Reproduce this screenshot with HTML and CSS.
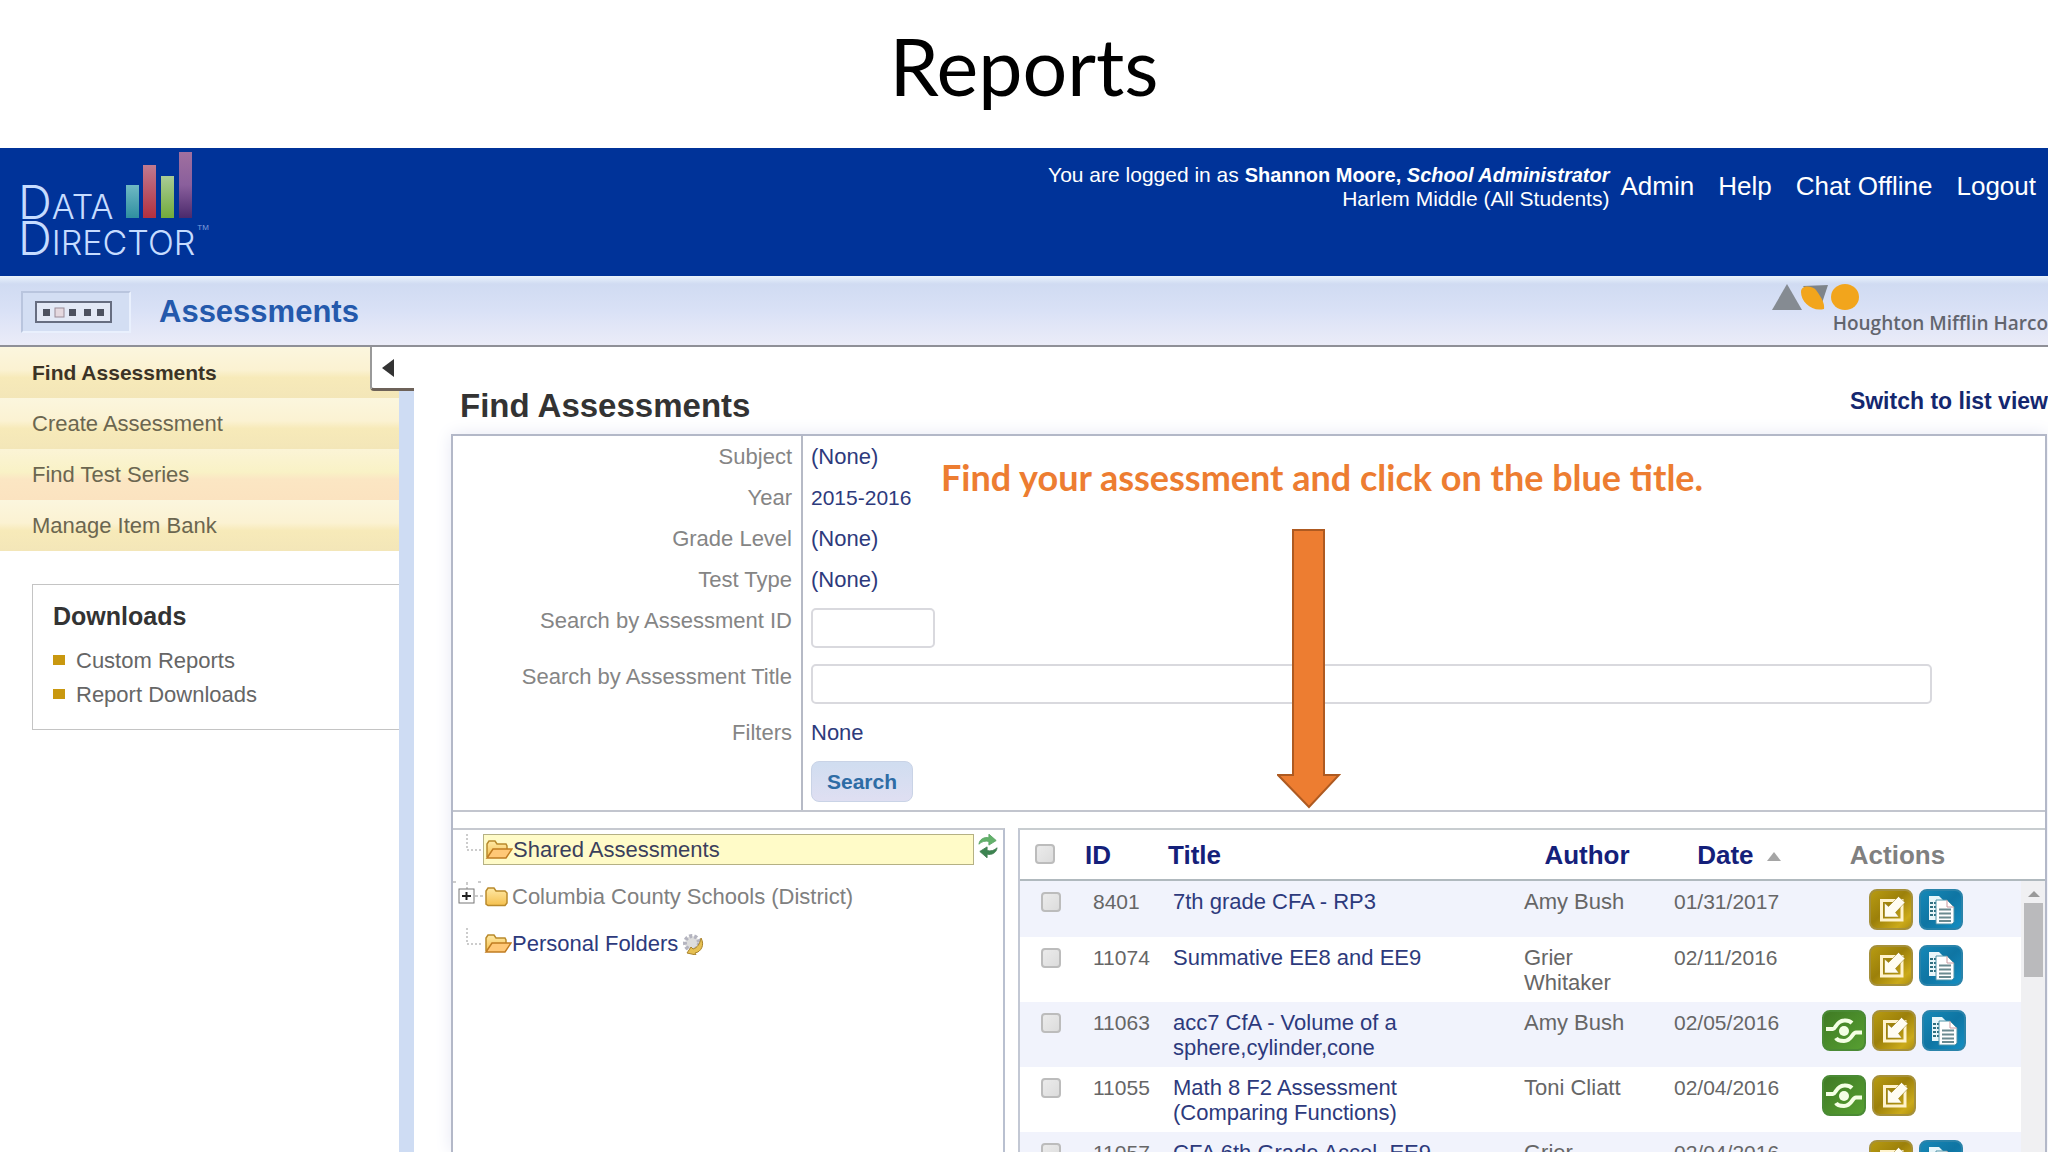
FILE: index.html
```html
<!DOCTYPE html>
<html lang="en">
<head>
    <meta charset="UTF-8">
    <meta name="viewport" content="width=device-width, initial-scale=1.0">
    <title>Reports</title>
    <link rel="stylesheet" href="styles.css">
</head>
<body>
    <!-- Shared icon shapes -->
    <svg class="sprite" aria-hidden="true">
        <defs>
            <linearGradient id="gold" x1="0" y1="0" x2="1" y2="1">
                <stop offset="0" stop-color="#b99c12"/>
                <stop offset="0.45" stop-color="#9c800a"/>
                <stop offset="0.8" stop-color="#cbaa1a"/>
                <stop offset="1" stop-color="#ab8d10"/>
            </linearGradient>
            <linearGradient id="blue" x1="0" y1="0" x2="1" y2="1">
                <stop offset="0" stop-color="#1689b8"/>
                <stop offset="0.5" stop-color="#0f75a3"/>
                <stop offset="1" stop-color="#1590c4"/>
            </linearGradient>
            <linearGradient id="green" x1="0" y1="0" x2="1" y2="1">
                <stop offset="0" stop-color="#3f7a24"/>
                <stop offset="1" stop-color="#57a032"/>
            </linearGradient>
            <linearGradient id="folder" x1="0" y1="0" x2="0" y2="1">
                <stop offset="0" stop-color="#ffe9a6"/>
                <stop offset="1" stop-color="#f5c04e"/>
            </linearGradient>
        </defs>
        <symbol id="icon-edit" viewBox="0 0 44 41">
            <rect x="1" y="1" width="42" height="39" rx="7" fill="url(#gold)" stroke="#a5903a" stroke-width="2"/>
            <path d="M12.500 11.500H33V31H12.500Z" fill="none" stroke="#fff3cc" stroke-width="3"/>
            <path d="M15.500 28V14L19.500 17.500L29.500 7.500L36 13.500L26.500 23.500L30 28Z" fill="#fffdf2" stroke="#8d7410" stroke-width="0.500"/>
        </symbol>
        <symbol id="icon-copy" viewBox="0 0 44 41">
            <rect x="1" y="1" width="42" height="39" rx="7" fill="url(#blue)" stroke="#2a83aa" stroke-width="2"/>
            <path d="M10 7H20L24 11V31H10Z" fill="#e8f6fa"/>
            <path d="M11 14H17M11 18H17M11 22H17M11 26H17" stroke="#2f6f80" stroke-width="2" stroke-dasharray="3 1"/>
            <path d="M17 11H28L35 18V33L33 35H17Z" fill="#fff" stroke="#4f93a8"/>
            <path d="M28 11V18H35" fill="none" stroke="#c99aa0"/>
            <path d="M20 20.500H32M20 24.500H32M20 28.500H32M20 32H32" stroke="#6a8a90" stroke-width="2"/>
        </symbol>
        <symbol id="icon-share" viewBox="0 0 44 41">
            <rect x="1" y="1" width="42" height="39" rx="7" fill="url(#green)" stroke="#4a8a35" stroke-width="2"/>
            <circle cx="22" cy="21" r="5" fill="#f4ffe4"/>
            <path d="M4 19H11C14 19 14 11 22 10.500C26 10 28 11 30 13" fill="none" stroke="#f4ffe4" stroke-width="4"/>
            <path d="M40 22.500H34C30 22.500 30 31 22 31C18 31 15 30 14 28" fill="none" stroke="#f4ffe4" stroke-width="4"/>
        </symbol>
        <symbol id="icon-folder-open" viewBox="0 0 28 20">
            <path d="M2 17V4L4 1H10L12 4H21L22 6V9" fill="url(#folder)" stroke="#b98a2c" stroke-width="1.500"/>
            <path d="M2 18L8 9H27L21 18Z" fill="#ffc877" stroke="#c07c22" stroke-width="1.500"/>
        </symbol>
        <symbol id="icon-folder" viewBox="0 0 28 20">
            <path d="M2 17V4L4 1H10L12 4H21L23 6V16L21 18.500H4Z" fill="url(#folder)" stroke="#b98a2c" stroke-width="1.500"/>
        </symbol>
    </svg>

    <h1 class="slide-title">Reports</h1>

    <header class="topbar">
        <div class="logo">
            <div class="logo-row">
                <span class="logo-text"><span class="logo-cap">D</span>ATA</span>
                <svg class="logo-bars" width="68" height="66" viewBox="0 0 68 66" aria-hidden="true">
                    <defs>
                        <linearGradient id="bar1" x1="0" y1="0" x2="0" y2="1"><stop offset="0" stop-color="#6fb9c4"/><stop offset="1" stop-color="#2f8fa0"/></linearGradient>
                        <linearGradient id="bar2" x1="0" y1="0" x2="0" y2="1"><stop offset="0" stop-color="#c07a90"/><stop offset="1" stop-color="#b3303f"/></linearGradient>
                        <linearGradient id="bar3" x1="0" y1="0" x2="0" y2="1"><stop offset="0" stop-color="#a9cc96"/><stop offset="1" stop-color="#72ab3b"/></linearGradient>
                        <linearGradient id="bar4" x1="0" y1="0" x2="0" y2="1"><stop offset="0" stop-color="#a0709f"/><stop offset="0.500" stop-color="#8a5f9c"/><stop offset="1" stop-color="#4b2a6c"/></linearGradient>
                    </defs>
                    <rect x="1" y="33" width="13" height="33" fill="url(#bar1)"/>
                    <rect x="18" y="13" width="13" height="53" fill="url(#bar2)"/>
                    <rect x="36" y="24" width="13" height="42" fill="url(#bar3)"/>
                    <rect x="54" y="0" width="13" height="66" fill="url(#bar4)"/>
                </svg>
            </div>
            <div class="logo-row">
                <span class="logo-text"><span class="logo-cap">D</span>IRECTOR</span>
                <span class="logo-tm">TM</span>
            </div>
        </div>
        <div class="account">
            <div class="user-info">
                <div>You are logged in as <b>Shannon Moore, <i>School Administrator</i></b></div>
                <div>Harlem Middle (All Students)</div>
            </div>
            <nav class="top-links">
                <a href="#">Admin</a>
                <a href="#">Help</a>
                <a href="#">Chat Offline</a>
                <a href="#">Logout</a>
            </nav>
        </div>
    </header>

    <div class="subbar">
        <div class="section">
            <div class="section-icon">
                <svg width="78" height="22" viewBox="0 0 78 22" aria-hidden="true">
                    <rect x="1" y="1" width="75" height="20" fill="#e3e9f6" stroke="#666d80" stroke-width="2"/>
                    <path d="M8 8h7v7h-7zM34 8h7v7h-7zM49 8h7v7h-7zM62 8h7v7h-7z" fill="#4d5260"/>
                    <rect x="20" y="7" width="9" height="9" fill="#e4d8df" stroke="#9a8c98"/>
                </svg>
            </div>
            <h2 class="section-title">Assessments</h2>
        </div>
        <div class="publisher">
            <svg width="90" height="26" viewBox="0 0 90 26" aria-hidden="true">
                <path d="M15 0L30 26H0Z" fill="#858b92"/>
                <path d="M31 2L56 1L48 25Z" fill="#7e848a"/>
                <path d="M29 8C29 0 41 2 44 6C48 12 53 18 52 25C40 28 29 18 29 8Z" fill="#f2a51c"/>
                <ellipse cx="73" cy="13" rx="14" ry="13" fill="#f2a51c"/>
            </svg>
            <span class="publisher-name">Houghton Mifflin Harco</span>
        </div>
    </div>

    <div class="workspace">
        <aside class="sidebar">
            <nav class="side-nav">
                <a class="active" href="#">Find Assessments</a>
                <a href="#">Create Assessment</a>
                <a class="warm" href="#">Find Test Series</a>
                <a href="#">Manage Item Bank</a>
            </nav>
            <section class="downloads">
                <h3>Downloads</h3>
                <ul>
                    <li><a href="#">Custom Reports</a></li>
                    <li><a href="#">Report Downloads</a></li>
                </ul>
            </section>
            <button class="collapse-btn" aria-label="Collapse menu"></button>
        </aside>
        <div class="divider"></div>

        <main class="content">
            <div class="content-head">
                <h2>Find Assessments</h2>
                <a href="#">Switch to list view</a>
            </div>

            <div class="panel">
                <form class="search-form">
                    <div class="form-row"><span class="form-label">Subject</span><div class="form-value"><a href="#">(None)</a></div></div>
                    <div class="form-row"><span class="form-label">Year</span><div class="form-value"><a class="num" href="#">2015-2016</a></div></div>
                    <div class="form-row"><span class="form-label">Grade Level</span><div class="form-value"><a href="#">(None)</a></div></div>
                    <div class="form-row"><span class="form-label">Test Type</span><div class="form-value"><a href="#">(None)</a></div></div>
                    <div class="form-row"><label class="form-label" for="assessment-id">Search by Assessment ID</label><div class="form-value field"><input class="short" id="assessment-id" type="text"></div></div>
                    <div class="form-row"><label class="form-label" for="assessment-title">Search by Assessment Title</label><div class="form-value field"><input id="assessment-title" type="text"></div></div>
                    <div class="form-row"><span class="form-label">Filters</span><div class="form-value"><a href="#">None</a></div></div>
                    <div class="form-row"><span class="form-label"></span><div class="form-value field"><button class="search-btn" type="button">Search</button></div></div>
                </form>

                <div class="callout">Find your assessment and click on the blue title.</div>
                <svg class="arrow" width="64" height="280" viewBox="0 0 64 280" aria-hidden="true">
                    <path d="M16 1H47V246H62L32 278L1 246H16Z" fill="#ed7d31" stroke="#ae5a21" stroke-width="2"/>
                </svg>

                <div class="lower">
                    <div class="tree">
                        <div class="tree-row">
                            <svg class="branch" width="30" height="34" aria-hidden="true"><path d="M14 0V16H30" fill="none" stroke="#999" stroke-dasharray="2 2"/></svg>
                            <a class="node selected" href="#"><svg class="folder"><use href="#icon-folder-open"/></svg>Shared Assessments</a>
                            <svg class="refresh" width="20" height="24" viewBox="0 0 22 26" aria-hidden="true">
                                <path d="M1 11C2 5 7 3 12 4V0L20 7L12 12V8C8 7 4 8 1 11Z" fill="#63b26b" stroke="#5aa564"/>
                                <path d="M21 15C20 21 15 23 10 22V26L2 19L10 14V18C14 19 18 18 21 15Z" fill="#3c8450" stroke="#437f54"/>
                            </svg>
                        </div>
                        <div class="tree-row">
                            <svg class="branch" width="30" height="34" aria-hidden="true">
                                <path d="M0 1H5M14 1V8M22 15H30M25 1H30" fill="none" stroke="#999" stroke-dasharray="3 2"/>
                                <rect x="6" y="8" width="15" height="14" fill="#fff" stroke="#777"/>
                                <path d="M9 15H18M13.500 11V19" stroke="#222" stroke-width="2"/>
                            </svg>
                            <a class="node muted" href="#"><svg class="folder"><use href="#icon-folder"/></svg>Columbia County Schools (District)</a>
                        </div>
                        <div class="tree-row">
                            <svg class="branch" width="30" height="34" aria-hidden="true"><path d="M14 0V16H30" fill="none" stroke="#999" stroke-dasharray="2 2"/></svg>
                            <a class="node" href="#"><svg class="folder"><use href="#icon-folder-open"/></svg>Personal Folders
                                <svg class="gear" width="22" height="22" viewBox="0 0 22 22" aria-hidden="true">
                                    <circle cx="10" cy="10" r="7" fill="#ddd" stroke="#b4b4bf" stroke-width="4" stroke-dasharray="3 2"/>
                                    <path d="M19 5C23 12 19 19 13 20L14 22L5 20L9 14L11 16C15 15 18 11 19 5Z" fill="#e6c052" stroke="#a8822b"/>
                                </svg></a>
                        </div>
                    </div>

                    <div class="results">
                        <table>
                            <thead>
                                <tr>
                                    <th class="col-check"><input type="checkbox" aria-label="Select all"></th>
                                    <th class="col-id">ID</th>
                                    <th class="col-title">Title</th>
                                    <th class="col-author">Author</th>
                                    <th class="col-date">Date <span class="sort"></span></th>
                                    <th class="col-actions">Actions</th>
                                </tr>
                            </thead>
                            <tbody>
                                <tr>
                                    <td><input type="checkbox" aria-label="Select 8401"></td>
                                    <td class="num">8401</td>
                                    <td><a href="#">7th grade CFA - RP3</a></td>
                                    <td>Amy Bush</td>
                                    <td class="num">01/31/2017</td>
                                    <td><div class="actions"><span class="no-share"></span><button aria-label="Edit"><svg><use href="#icon-edit"/></svg></button><button aria-label="Copy"><svg><use href="#icon-copy"/></svg></button></div></td>
                                </tr>
                                <tr>
                                    <td><input type="checkbox" aria-label="Select 11074"></td>
                                    <td class="num">11074</td>
                                    <td><a href="#">Summative EE8 and EE9</a></td>
                                    <td>Grier Whitaker</td>
                                    <td class="num">02/11/2016</td>
                                    <td><div class="actions"><span class="no-share"></span><button aria-label="Edit"><svg><use href="#icon-edit"/></svg></button><button aria-label="Copy"><svg><use href="#icon-copy"/></svg></button></div></td>
                                </tr>
                                <tr>
                                    <td><input type="checkbox" aria-label="Select 11063"></td>
                                    <td class="num">11063</td>
                                    <td><a href="#">acc7 CfA - Volume of a sphere,cylinder,cone</a></td>
                                    <td>Amy Bush</td>
                                    <td class="num">02/05/2016</td>
                                    <td><div class="actions"><button aria-label="Share"><svg><use href="#icon-share"/></svg></button><button aria-label="Edit"><svg><use href="#icon-edit"/></svg></button><button aria-label="Copy"><svg><use href="#icon-copy"/></svg></button></div></td>
                                </tr>
                                <tr>
                                    <td><input type="checkbox" aria-label="Select 11055"></td>
                                    <td class="num">11055</td>
                                    <td><a href="#">Math 8 F2 Assessment (Comparing Functions)</a></td>
                                    <td>Toni Cliatt</td>
                                    <td class="num">02/04/2016</td>
                                    <td><div class="actions"><button aria-label="Share"><svg><use href="#icon-share"/></svg></button><button aria-label="Edit"><svg><use href="#icon-edit"/></svg></button></div></td>
                                </tr>
                                <tr>
                                    <td><input type="checkbox" aria-label="Select 11057"></td>
                                    <td class="num">11057</td>
                                    <td><a href="#">CFA 6th Grade Accel. EE9</a></td>
                                    <td>Grier</td>
                                    <td class="num">02/04/2016</td>
                                    <td><div class="actions"><span class="no-share"></span><button aria-label="Edit"><svg><use href="#icon-edit"/></svg></button><button aria-label="Copy"><svg><use href="#icon-copy"/></svg></button></div></td>
                                </tr>
                            </tbody>
                        </table>
                        <div class="scroll-side">
                            <div class="scroll-head"></div>
                            <div class="scrollbar">
                                <span class="scroll-up"></span>
                                <span class="scroll-thumb"></span>
                            </div>
                        </div>
                    </div>
                </div>
            </div>
        </main>
    </div>
</body>
</html>
```

FILE: styles.css
```css
* {
    box-sizing: border-box;
    margin: 0;
    padding: 0;
}

body {
    font-family: "Liberation Sans", Arial, sans-serif;
    font-size: 22px;
    line-height: 25px;
    color: #666;
    background-color: #fff;
    height: 100vh;
    overflow: hidden;
    display: flex;
    flex-direction: column;
}

a {
    color: #2d3a7c;
    text-decoration: none;
}

button {
    font-family: inherit;
    border: none;
    background: none;
    cursor: pointer;
}

.sprite {
    position: absolute;
    width: 0;
    height: 0;
}

.slide-title {
    flex: none;
    padding: 18px 0 34px;
    font-family: Lato, sans-serif;
    font-size: 79px;
    font-weight: 400;
    line-height: 96px;
    text-align: center;
    color: #000;
}

/* Top bar */
.topbar {
    flex: none;
    display: flex;
    justify-content: space-between;
    height: 128px;
    padding: 4px 12px 0 18px;
    background-color: #003399;
    color: #fff;
}

.logo-row {
    display: flex;
    align-items: flex-end;
    gap: 12px;
    color: #c6dcff;
}

.logo-text {
    font-family: Inter, sans-serif;
    font-size: 34px;
    font-weight: 300;
    line-height: 40px;
}

.logo-cap {
    font-size: 47px;
}

.logo-row:first-child {
    height: 66px;
}

.logo-row:first-child .logo-text {
    line-height: 48px;
    height: 40px;
}

.logo-tm {
    align-self: flex-start;
    margin-left: -10px;
    font-size: 8px;
    line-height: 20px;
    color: #7f9ddc;
}

.account {
    display: flex;
    gap: 11px;
    padding-top: 11px;
}

.user-info {
    font-size: 21px;
    line-height: 24px;
    text-align: right;
}

.user-info b {
    font-size: 20px;
}

.top-links {
    display: flex;
    gap: 24px;
    padding-top: 9px;
    font-size: 26px;
    line-height: 28px;
}

.top-links a {
    color: #fff;
}

/* Section bar */
.subbar {
    flex: none;
    display: flex;
    justify-content: space-between;
    height: 71px;
    padding-left: 21px;
    border-bottom: 2px solid #8f9097;
    background: linear-gradient(#eaf3fc 0, #d0dbf2 8px, #d9e1f6 50%, #ebecf8 100%);
}

.section {
    display: flex;
    align-items: center;
    gap: 28px;
    padding-top: 3px;
}

.section-icon {
    display: flex;
    align-items: center;
    justify-content: center;
    width: 110px;
    height: 42px;
    padding-right: 4px;
    border: 2px solid #e9f0fd;
    border-top-color: #b9c5de;
    border-left-color: #b9c5de;
    background-color: #d3def3;
}

.section-title {
    font-size: 31px;
    line-height: 36px;
    color: #2459ac;
}

.publisher {
    display: flex;
    flex-direction: column;
    padding-top: 8px;
}

.publisher-name {
    padding-left: 61px;
    font-family: "Open Sans", sans-serif;
    font-size: 19px;
    font-weight: 600;
    line-height: 26px;
    color: #62656e;
    white-space: nowrap;
}

/* Sidebar */
.workspace {
    flex: 1;
    display: flex;
    min-height: 0;
}

.sidebar {
    position: relative;
    flex: none;
    width: 399px;
}

.side-nav a {
    display: block;
    padding: 13px 32px;
    color: #6b6650;
    background: linear-gradient(#fbf6de 0, #fbf2d2 45%, #f7eab9 60%, #f3e6b8 100%);
}

.side-nav a.warm {
    background: linear-gradient(#fbf4d6 0, #f9f2c6 45%, #fbe6c3 60%, #fbe3c0 100%);
}

.side-nav a.active {
    font-size: 21px;
    font-weight: bold;
    color: #3b3326;
}

.collapse-btn {
    position: absolute;
    top: 0;
    right: -15px;
    width: 44px;
    height: 44px;
    padding-left: 10px;
    border-left: 2px solid #999;
    border-bottom: 3px solid #6d6259;
    border-bottom-left-radius: 4px;
    background-color: #fff;
}

.collapse-btn::before {
    content: "";
    display: block;
    width: 0;
    border: 9px solid transparent;
    border-left: none;
    border-right: 12px solid #333;
}

.divider {
    flex: none;
    width: 15px;
    background-color: #cedcf3;
}

.downloads {
    margin: 33px 0 0 32px;
    padding: 17px 20px 18px;
    border: 1px solid #c4c4c4;
    border-right: none;
}

.downloads h3 {
    margin-bottom: 13px;
    font-size: 25px;
    line-height: 28px;
    color: #333;
}

.downloads ul {
    list-style: none;
}

.downloads li {
    display: flex;
    align-items: center;
    gap: 11px;
    height: 34px;
}

.downloads li::before {
    content: "";
    width: 12px;
    height: 10px;
    background-color: #c9980f;
}

.downloads a {
    color: #666;
}

/* Content */
.content {
    flex: 1;
    display: flex;
    flex-direction: column;
    min-width: 0;
    padding: 0 1px 0 37px;
}

.content-head {
    flex: none;
    display: flex;
    justify-content: space-between;
    align-items: center;
    height: 87px;
    padding: 22px 0 0 9px;
}

.content-head h2 {
    padding-top: 9px;
    font-size: 33px;
    line-height: 36px;
    color: #333;
}

.content-head a {
    font-size: 23px;
    font-weight: bold;
    color: #14276f;
    margin-right: -1px;
}

.panel {
    position: relative;
    flex: 1;
    display: flex;
    flex-direction: column;
    min-height: 0;
    border: 2px solid #b3b8c8;
    border-bottom: none;
    box-shadow: 0 0 16px #e6e8f4;
    background-color: #fff;
}

.search-form {
    flex: none;
    border-bottom: 2px solid #c2c5ce;
}

.form-row {
    display: flex;
}

.form-label {
    width: 350px;
    padding: 8px 9px 8px 0;
    border-right: 2px solid #b6bac6;
    text-align: right;
    color: #858585;
}

.form-value {
    flex: 1;
    padding: 8px;
}

.form-value.field {
    display: flex;
}

.form-value input {
    width: calc(100% - 105px);
    height: 40px;
    padding: 0 8px;
    font: inherit;
    border: 2px solid #d9d9de;
    border-radius: 5px;
    background-color: #fff;
}

.form-value input.short {
    width: 124px;
}

.num {
    font-size: 21px;
}

.search-btn {
    height: 41px;
    padding: 0 15px;
    font-size: 21px;
    font-weight: bold;
    color: #2e6ca5;
    border: 1px solid #c9d3e6;
    border-radius: 8px;
    background: linear-gradient(#d0ddf0, #dfdff2);
}

/* Instruction over the form */
.callout {
    position: absolute;
    top: 21px;
    left: 488px;
    font-family: Lato, sans-serif;
    font-size: 36px;
    font-weight: bold;
    line-height: 40px;
    color: #ed7d31;
    white-space: nowrap;
}

.arrow {
    position: absolute;
    top: 93px;
    left: 824px;
}

.lower {
    flex: 1;
    display: flex;
    gap: 13px;
    min-height: 0;
    padding-top: 16px;
}

/* Folder tree */
.tree {
    flex: none;
    width: 552px;
    border-top: 2px solid #c6c9d0;
    border-right: 2px solid #b9c0d0;
}

.tree-row {
    display: flex;
    height: 47px;
    padding-top: 4px;
}

.branch {
    flex: none;
}

.node {
    display: flex;
    align-items: center;
    height: 31px;
}

.node.selected {
    width: 491px;
    border: 1px solid #b5b184;
    background-color: #fffbc8;
    color: #3b3f5c;
}

.node.muted {
    color: #808080;
}

.folder {
    width: 28px;
    height: 20px;
    margin-left: 1px;
}

.gear {
    margin-left: 4px;
}

.refresh {
    margin-left: 4px;
}

/* Results */
.results {
    flex: 1;
    display: flex;
    min-width: 0;
    border-top: 2px solid #c8cdd0;
    border-left: 2px solid #c3c8d4;
    overflow: hidden;
}

table {
    flex: 1;
    height: 0;
    table-layout: fixed;
    border-collapse: collapse;
}

th {
    height: 50px;
    font-size: 26px;
    line-height: 28px;
    color: #14207a;
    border-bottom: 2px solid #b0b9be;
}

td {
    padding: 8px 8px 7px;
    vertical-align: top;
}

tbody tr:nth-child(odd) {
    background-color: #f1f3fc;
}

.col-check {
    width: 65px;
    padding-right: 16px;
}

.col-id {
    width: 80px;
    text-align: left;
}

.col-title {
    padding-left: 3px;
    text-align: left;
}

.col-author {
    width: 150px;
    padding-right: 8px;
}

.col-date {
    width: 140px;
    padding-left: 6px;
}

.col-actions {
    width: 215px;
    padding-right: 32px;
    color: #808080;
}

td:nth-child(1) {
    padding-left: 21px;
}

td:nth-child(4) {
    padding-right: 16px;
}

input[type="checkbox"] {
    appearance: none;
    display: inline-block;
    width: 20px;
    height: 20px;
    margin-top: 3px;
    border: 2px solid #bcbcbc;
    border-radius: 4px;
    background: linear-gradient(135deg, #ebebeb, #dcdcdc);
}

th input[type="checkbox"] {
    margin-top: 0;
}

.sort {
    display: inline-block;
    margin-left: 6px;
    border: 7px solid transparent;
    border-top: none;
    border-bottom: 9px solid #a5a5a5;
    vertical-align: 3px;
}

.actions {
    display: flex;
    gap: 6px;
    padding-left: 8px;
}

.actions button,
.actions svg {
    display: block;
    width: 44px;
    height: 41px;
}

.no-share {
    width: 41px;
}

.scroll-side {
    flex: none;
    display: flex;
    flex-direction: column;
    width: 24px;
}

.scroll-head {
    height: 51px;
    border-bottom: 2px solid #b0b9be;
}

.scrollbar {
    flex: 1;
    padding: 10px 2px 0 3px;
    background-color: #f0f0f2;
}

.scroll-up {
    display: block;
    width: 12px;
    margin: 0 auto;
    border: 6px solid transparent;
    border-top: none;
    border-bottom: 6px solid #9a9a9a;
}

.scroll-thumb {
    display: block;
    height: 74px;
    margin-top: 6px;
    background-color: #bababc;
}
```
